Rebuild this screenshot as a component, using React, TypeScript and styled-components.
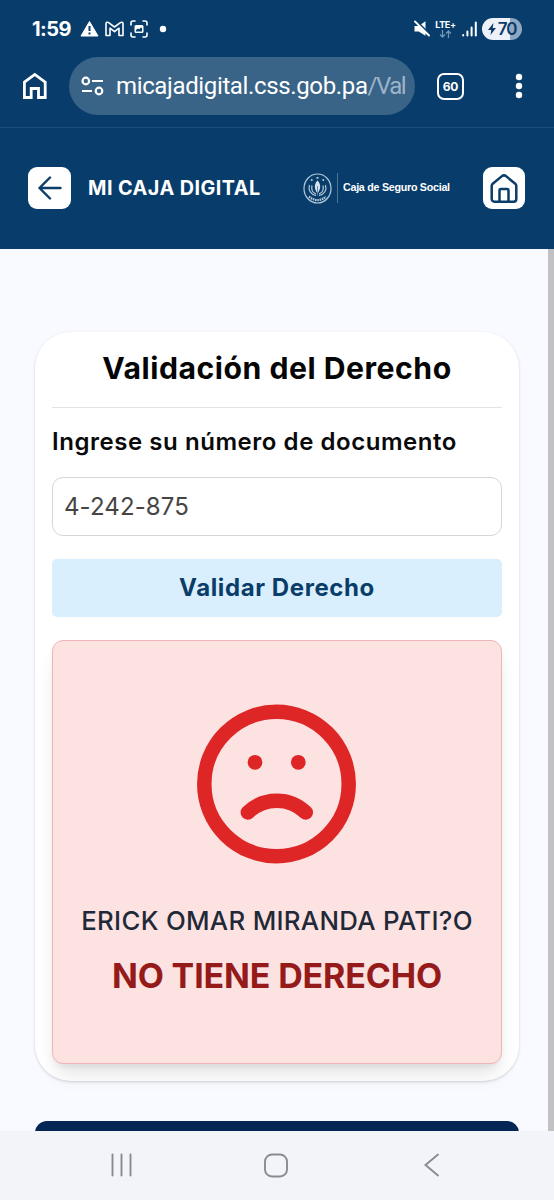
import React from 'react';
import styled, { createGlobalStyle } from 'styled-components';

const Global = createGlobalStyle`
  * { box-sizing: border-box; }
  body { margin: 0; background: #f9faff; font-family: Inter, "Open Sans", sans-serif; }
  svg { display: block; flex: none; }
`;

const Screen = styled.div`
  width: 554px;
  height: 1200px;
  display: flex;
  flex-direction: column;
  overflow: hidden;
`;

const StatusBar = styled.div`
  height: 57px;
  flex: none;
  padding: 0 32px 0 32px;
  background: #083d6b;
  color: #fff;
  display: flex;
  align-items: center;
  justify-content: space-between;
`;

const StatusGroup = styled.div<{ $gap: number }>`
  display: flex;
  align-items: center;
  gap: ${(p) => p.$gap}px;
`;

const Clock = styled.span`
  width: 42px;
  font-size: 20px;
  font-weight: 700;
  letter-spacing: -0.5px;
  line-height: 24px;
  white-space: nowrap;
`;

const Network = styled.div`
  display: flex;
  flex-direction: column;
  align-items: center;
  width: 21px;
  font-size: 9px;
  font-weight: 700;
  line-height: 10px;
  letter-spacing: -0.3px;
`;

const Battery = styled.div`
  width: 40px;
  height: 22px;
  border-radius: 11px;
  background: linear-gradient(90deg, #edf2fa 70%, #8ea7c3 70%);
  color: #0b3a66;
  display: flex;
  align-items: center;
  justify-content: center;
  gap: 2px;
  font-size: 17px;
  font-weight: 600;
  line-height: 22px;
  letter-spacing: -1.2px;
`;

const BrowserBar = styled.div`
  height: 71px;
  flex: none;
  padding: 0 30px 12px 22px;
  background: #083d6b;
  border-bottom: 1px solid #1e4e7c;
  color: #fff;
  display: flex;
  align-items: center;
`;

const AddressBar = styled.div`
  width: 346px;
  height: 58px;
  margin: 0 22px 0 21px;
  padding: 0 0 0 12px;
  border-radius: 29px;
  background: #396487;
  display: flex;
  align-items: center;
  gap: 12px;
`;

const Url = styled.span`
  white-space: nowrap;
  font-family: Roboto, sans-serif;
  font-size: 24px;
  line-height: 34px;
  letter-spacing: -0.36px;
`;

const Path = styled.span`
  color: #9db3c9;
  letter-spacing: -1.5px;
`;

const TabCount = styled.div`
  width: 27px;
  height: 27px;
  margin-right: auto;
  border: 2.5px solid #fff;
  border-radius: 7px;
  display: flex;
  align-items: center;
  justify-content: center;
  font-size: 12px;
  font-weight: 700;
  letter-spacing: -0.3px;
`;

const AppHeader = styled.header`
  height: 121px;
  flex: none;
  padding: 0 29px 1px 28px;
  background: #083d6b;
  color: #fff;
  display: flex;
  align-items: center;
`;

const IconButton = styled.button<{ $width: number }>`
  width: ${(p) => p.$width}px;
  height: 42px;
  padding: 0;
  border: 0;
  border-radius: 9px;
  background: #fff;
  color: #0b3d69;
  display: flex;
  align-items: center;
  justify-content: center;
`;

const AppName = styled.span`
  width: 215px;
  padding-left: 17px;
  font-size: 19.8px;
  font-weight: 700;
  line-height: 28px;
  letter-spacing: 0.45px;
  white-space: nowrap;
`;

const Brand = styled.div`
  display: flex;
  align-items: center;
  margin: 0 auto 0 17px;
`;

const BrandName = styled.span`
  height: 30px;
  margin-left: 5px;
  padding-left: 5px;
  border-left: 1px solid #4c7596;
  font-family: "Liberation Sans", sans-serif;
  font-size: 10.7px;
  font-weight: 700;
  line-height: 29px;
  letter-spacing: -0.26px;
  white-space: nowrap;
`;

const Page = styled.main`
  height: 882px;
  flex: none;
  padding: 83px 29px 0 35px;
  background: #f9faff;
  border-right: 6px solid #c1c1c3;
  overflow: hidden;
`;

const Card = styled.section`
  width: 484px;
  height: 749px;
  padding: 17px;
  border-radius: 36px;
  background: #fff;
  box-shadow: 0 1px 3px rgba(0, 0, 0, 0.16);
  display: flex;
  flex-direction: column;
`;

const Title = styled.h1`
  height: 59px;
  flex: none;
  margin: 0;
  border-bottom: 1px solid #e3e4e6;
  color: #050505;
  text-align: center;
  font-size: 30.2px;
  font-weight: 700;
  line-height: 38px;
  letter-spacing: 0.5px;
  white-space: nowrap;
`;

const Label = styled.label`
  margin: 16px 0 18px;
  color: #0a0a0a;
  font-size: 24px;
  font-weight: 600;
  line-height: 35px;
  letter-spacing: 0.55px;
  white-space: nowrap;
`;

const Field = styled.div`
  height: 59px;
  flex: none;
  padding: 0 11px;
  border: 1px solid #d5d6d8;
  border-radius: 11px;
  color: #454545;
  font-size: 24px;
  line-height: 58px;
  letter-spacing: 0.1px;
`;

const Submit = styled.button`
  height: 58px;
  flex: none;
  margin: 23px 0;
  padding: 0 0 1px;
  border: 0;
  border-radius: 5px;
  background: #d9effe;
  color: #0b3d69;
  font-family: inherit;
  font-size: 24px;
  font-weight: 700;
  letter-spacing: 0.6px;
`;

const Result = styled.div`
  height: 424px;
  flex: none;
  padding-top: 63px;
  border: 1px solid #f0b4b8;
  border-radius: 11px;
  background: #fde2e2;
  box-shadow: 0 14px 20px -4px rgba(0, 0, 0, 0.1), 0 5px 8px -4px rgba(0, 0, 0, 0.1);
  display: flex;
  flex-direction: column;
  align-items: center;
`;

const Person = styled.p`
  margin: 38px 0 0;
  color: #1f2937;
  font-size: 25.8px;
  font-weight: 500;
  line-height: 38px;
  letter-spacing: 0.31px;
  white-space: nowrap;
`;

const Verdict = styled.p`
  margin: 10px 0 0;
  color: #951a1a;
  font-size: 34px;
  font-weight: 700;
  line-height: 52px;
  letter-spacing: -0.15px;
  white-space: nowrap;
`;

const NextPanel = styled.div`
  width: 484px;
  height: 60px;
  margin-top: 40px;
  border-radius: 12px;
  background: #042654;
`;

const NavBar = styled.nav`
  height: 69px;
  flex: none;
  padding: 0 114px 1px 110px;
  background: #f3f4f9;
  color: #8a8b90;
  display: flex;
  align-items: center;
`;

const NavItem = styled.span<{ $before: number }>`
  margin-left: ${(p) => p.$before}px;
`;

const WarningIcon = () => (
  <svg width="19" height="18" viewBox="0 0 19 18">
    <path d="M9.5 1.500 18 16H1Z" fill="#fff" stroke="#fff" strokeLinejoin="round" />
    <path d="M9.500 6v5M9.500 12.500v2" stroke="#083d6b" strokeWidth="2" />
  </svg>
);

const MailIcon = () => (
  <svg width="19" height="16" viewBox="0 0 19 16" fill="none" stroke="#fff" strokeWidth="1.600" strokeLinejoin="round">
    <path d="M1 14.500V2.800C1 1.200 2.500.8 3.600 1.600L9.500 6l5.900-4.400C16.500.8 18 1.200 18 2.800v11.700h-4V7.200l-4.500 3.400L5 7.200v7.300Z" />
  </svg>
);

const CaptureIcon = () => (
  <svg width="18" height="18" viewBox="0 0 18 18" fill="none" stroke="#fff" strokeWidth="1.600" strokeLinecap="round">
    <path d="M1 5V3a2 2 0 0 1 2-2h2M13 1h2a2 2 0 0 1 2 2v2M17 13v2a2 2 0 0 1-2 2h-2M5 17H3a2 2 0 0 1-2-2v-2" />
    <rect x="4.500" y="5" width="9" height="8" rx="1.500" fill="#fff" stroke="none" />
    <path d="M6 11.500V10l2-1.500 1.200.8L11 7.500l1 .8v3.200Z" fill="#083d6b" stroke="none" />
  </svg>
);

const MutedIcon = () => (
  <svg width="16" height="17" viewBox="0 0 16 17">
    <path d="M.5 6h4.200L11.500 1.200v14.600L4.700 11.500H.5Z" fill="#fff" />
    <path d="M2.500 1 16 14.500" stroke="#083d6b" strokeWidth="1.800" />
    <path d="m1 1.500 14 14" stroke="#fff" strokeWidth="1.800" strokeLinecap="round" />
  </svg>
);

const SignalIcon = () => (
  <svg width="15" height="16" viewBox="0 0 15 16" stroke="#fff" strokeWidth="2" strokeLinecap="round">
    <path d="M1.200 14v.5M5.400 10.500v4M9.600 6.500v8M13.800 1.500v13" />
  </svg>
);

const SadFace = () => (
  <svg width="160" height="160" viewBox="0 0 160 160" fill="none" stroke="#df2626" strokeWidth="14.500" strokeLinecap="round">
    <circle cx="79.500" cy="80" r="72.200" />
    <path d="M50.800 108.500a41.500 41.500 0 0 1 58 0" />
    <circle cx="58" cy="58.300" r="7.400" fill="#df2626" stroke="none" />
    <circle cx="101.300" cy="58.300" r="7.400" fill="#df2626" stroke="none" />
  </svg>
);

const Seal = () => (
  <svg width="29" height="31" viewBox="0 0 29 31" fill="none" stroke="#b4c8da">
    <ellipse cx="14.500" cy="15.500" rx="13.500" ry="14.500" strokeWidth="1.200" />
    <path d="M6.500 12c-1.500 5 1 9.500 6.500 10.500M22.500 12c1.500 5-1 9.500-6.500 10.500M9 12.500c-1 4 .5 7 4 8.500M20 12.500c1 4-.5 7-4 8.500" strokeWidth="1.200" />
    <path d="M14.500 7.500c4 4 3 9 0 13-3-4-4-9 0-13Z" fill="#d8e3ee" stroke="none" />
    <path d="M14.500 13v10" stroke="#527a9d" strokeWidth=".8" />
    <path d="M6 23.500c5 4.800 12 4.800 17 0" strokeWidth="2.200" strokeDasharray="1.600 .7" />
    <path d="M8 7.500l1.500-1M13.500 4.800h2M19.500 6.500l1.500 1" strokeWidth="1.800" />
  </svg>
);

export default function App() {
  return (
    <Screen>
      <Global />
      <StatusBar>
        <StatusGroup $gap={6}>
          <Clock>1:59</Clock>
          <WarningIcon />
          <MailIcon />
          <CaptureIcon />
          <svg width="20" height="8" viewBox="0 0 20 8"><circle cx="9" cy="4" r="3.200" fill="#fff" /></svg>
        </StatusGroup>
        <StatusGroup $gap={5.5}>
          <MutedIcon />
          <Network>
            LTE+
            <svg width="13" height="8" viewBox="0 0 13 8" fill="none" stroke="#6f94b4" strokeWidth="1.300"><path d="M3.500 0v7M1 4.500 3.500 7 6 4.500M9.500 8V1M7 3.500 9.500 1 12 3.500" /></svg>
          </Network>
          <SignalIcon />
          <Battery>
            <svg width="8" height="12" viewBox="0 0 8 12"><path d="M5.500 0 0 7h3.300L2.500 12 8 5H4.700Z" fill="#0b3a66" /></svg>
            70
          </Battery>
        </StatusGroup>
      </StatusBar>
      <BrowserBar>
        <svg width="26" height="28" viewBox="0 0 26 28" fill="none" stroke="#fff" strokeWidth="2.800">
          <path d="M2.400 10.200 12.800 2.400l10.400 7.800v15.300h-6.700v-9H9.200v9H2.400Z" />
        </svg>
        <AddressBar>
          <svg width="23" height="20" viewBox="0 0 23 20" fill="none" stroke="#fff" strokeWidth="2.200">
            <circle cx="4.800" cy="5" r="3.300" /><path d="M11 5h11M1 15h10" /><circle cx="18" cy="15" r="3.300" />
          </svg>
          <Url>micajadigital.css.gob.pa<Path>/Val</Path></Url>
        </AddressBar>
        <TabCount>60</TabCount>
        <svg width="10" height="26" viewBox="0 0 10 26" fill="#fff"><circle cx="5" cy="4" r="3.200" /><circle cx="5" cy="13" r="3.200" /><circle cx="5" cy="22" r="3.200" /></svg>
      </BrowserBar>
      <AppHeader>
        <IconButton $width={43} aria-label="Volver">
          <svg width="24" height="24" viewBox="0 0 24 24" fill="none" stroke="currentColor" strokeWidth="2.400" strokeLinecap="round" strokeLinejoin="round"><path d="M22.500 12H1.500M12 1.500 1.500 12 12 22.500" /></svg>
        </IconButton>
        <AppName>MI CAJA DIGITAL</AppName>
        <Brand>
          <Seal />
          <BrandName>Caja de Seguro Social</BrandName>
        </Brand>
        <IconButton $width={42} aria-label="Inicio">
          <svg width="28" height="29" viewBox="0 0 28 29" fill="none" stroke="currentColor" strokeWidth="2.500" strokeLinejoin="round">
            <path d="M1.700 12c0-1 .3-1.600 1-2.200l9.300-7.700c1.200-.9 2.800-.9 4 0l9.300 7.700c.7.600 1 1.200 1 2.200v13a2.700 2.700 0 0 1-2.700 2.700H4.400a2.700 2.700 0 0 1-2.700-2.700Z" />
            <path d="M9.500 27V16.500c0-1 .5-1.500 1.500-1.500h6c1 0 1.500.5 1.500 1.500V27" />
          </svg>
        </IconButton>
      </AppHeader>
      <Page>
        <Card>
          <Title>Validación del Derecho</Title>
          <Label>Ingrese su número de documento</Label>
          <Field>4-242-875</Field>
          <Submit>Validar Derecho</Submit>
          <Result>
            <SadFace />
            <Person>ERICK OMAR MIRANDA PATI?O</Person>
            <Verdict>NO TIENE DERECHO</Verdict>
          </Result>
        </Card>
        <NextPanel />
      </Page>
      <NavBar>
        <NavItem $before={0}><svg width="23" height="24" viewBox="0 0 23 24" stroke="currentColor" strokeWidth="1.900" strokeLinecap="round"><path d="M2.500 1.500v21M11.500 1.500v21M20.500 1.500v21" /></svg></NavItem>
        <NavItem $before={131}><svg width="24" height="25" viewBox="0 0 24 25" fill="none" stroke="currentColor" strokeWidth="1.900"><rect x="1" y="1.500" width="22" height="22" rx="7" /></svg></NavItem>
        <NavItem $before={135}><svg width="17" height="24" viewBox="0 0 17 24" fill="none" stroke="currentColor" strokeWidth="1.900" strokeLinecap="round"><path d="M15 1.500 2.500 12 15 22.500" /></svg></NavItem>
      </NavBar>
    </Screen>
  );
}
